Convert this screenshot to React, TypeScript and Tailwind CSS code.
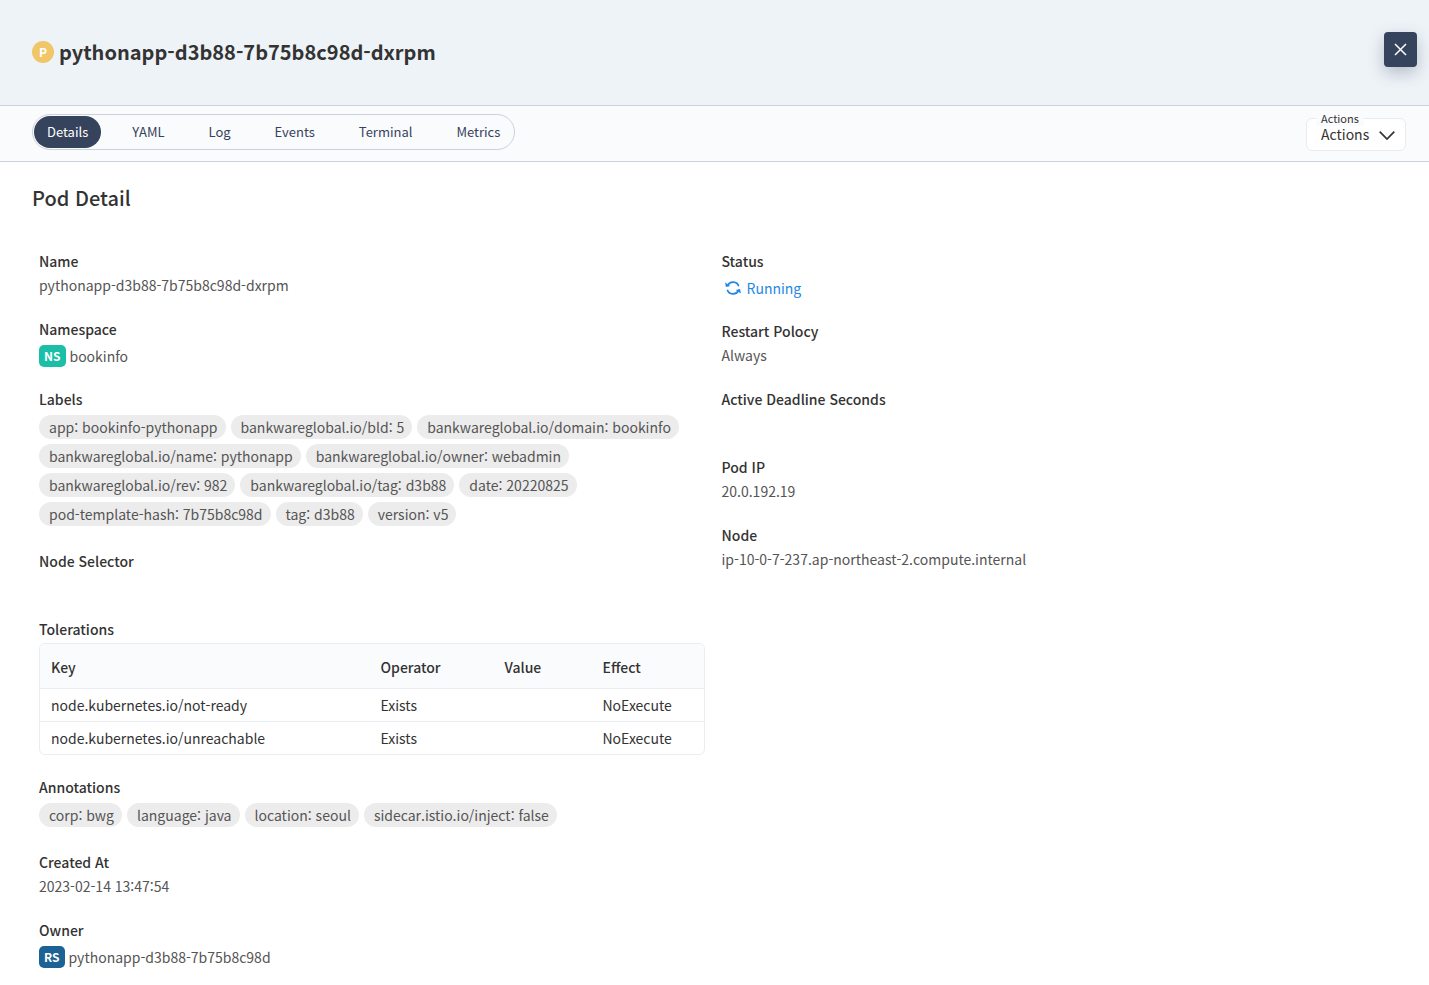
import { useState } from "react";
import type { ReactNode } from "react";

const tabs = ["Details", "YAML", "Log", "Events", "Terminal", "Metrics"];

const labels = [
  "app: bookinfo-pythonapp",
  "bankwareglobal.io/bld: 5",
  "bankwareglobal.io/domain: bookinfo",
  "bankwareglobal.io/name: pythonapp",
  "bankwareglobal.io/owner: webadmin",
  "bankwareglobal.io/rev: 982",
  "bankwareglobal.io/tag: d3b88",
  "date: 20220825",
  "pod-template-hash: 7b75b8c98d",
  "tag: d3b88",
  "version: v5",
];

const annotations = ["corp: bwg", "language: java", "location: seoul", "sidecar.istio.io/inject: false"];

const tolerations = [
  { key: "node.kubernetes.io/not-ready", operator: "Exists", value: "", effect: "NoExecute" },
  { key: "node.kubernetes.io/unreachable", operator: "Exists", value: "", effect: "NoExecute" },
];

function Field({ label, children }: { label: string; children?: ReactNode }) {
  return (
    <div className="pb-5">
      <dt className="font-medium text-[#333]">{label}</dt>
      <dd className="min-h-6">{children}</dd>
    </div>
  );
}

function Chips({ items }: { items: string[] }) {
  return (
    <ul className="flex flex-wrap gap-[5px] pt-1 pb-[3px]">
      {items.map((item) => (
        <li key={item} className="rounded-full bg-[#ececec] pr-2 pl-[10px]">
          {item}
        </li>
      ))}
    </ul>
  );
}

function Badge({ tone, children }: { tone: string; children: ReactNode }) {
  return (
    <span className={`flex h-[22px] items-center rounded-[5px] pr-[6px] pl-[5px] text-xs font-bold text-white ${tone}`}>
      {children}
    </span>
  );
}

function SyncIcon() {
  return (
    <svg viewBox="0 0 16 14" className="h-[14px] w-4" fill="none" stroke="currentColor" strokeWidth="1.7" aria-hidden="true">
      <path d="M2.6 4.4A6 6 0 0 1 13.7 5.2M13.4 9.6A6 6 0 0 1 2.3 8.8" />
      <path d="M.1 1.6L5.3 5L.9 6ZM15.9 12.4L10.7 9L15.1 8Z" fill="currentColor" stroke="none" />
    </svg>
  );
}

function Tolerations() {
  return (
    <div className="mt-[2px] overflow-hidden rounded-md border border-[#e9edf2] text-[#333]">
      <table className="w-full table-fixed border-collapse text-left">
        <colgroup>
          <col />
          <col className="w-[124px]" />
          <col className="w-[98px]" />
          <col className="w-[112px]" />
        </colgroup>
        <thead className="bg-[#fafbfd]">
          <tr className="h-11 border-b border-[#e9edf2]">
            {["Key", "Operator", "Value", "Effect"].map((heading) => (
              <th key={heading} scope="col" className="pt-[3px] pl-[11px] font-medium">
                {heading}
              </th>
            ))}
          </tr>
        </thead>
        <tbody>
          {tolerations.map((row) => (
            <tr key={row.key} className="h-[33px] border-b border-[#e9edf2] last:border-b-0">
              <td className="pl-[11px]">{row.key}</td>
              <td className="pl-[11px]">{row.operator}</td>
              <td className="pl-[11px]">{row.value}</td>
              <td className="pl-[11px]">{row.effect}</td>
            </tr>
          ))}
        </tbody>
      </table>
    </div>
  );
}

export default function App() {
  const [active, setActive] = useState("Details");

  return (
    <div
      lang="ko"
      className="min-h-screen bg-white font-['Noto_Sans_CJK_KR','Noto_Sans',sans-serif] text-sm leading-6 text-[#555]"
    >
      <header className="flex items-start justify-between border-b border-[#cbd2dc] bg-[#eef3f8] pt-8 pr-3 pb-[37px] pl-8">
        <div className="flex items-center gap-[5px] pt-1">
          <span className="flex size-[22px] items-center justify-center rounded-full bg-[#f0c669] text-xs font-bold text-white">
            P
          </span>
          <h1 className="text-xl leading-8 font-bold text-[#333]">pythonapp-d3b88-7b75b8c98d-dxrpm</h1>
        </div>
        <button
          type="button"
          aria-label="Close"
          className="flex h-[35px] w-[33px] items-center justify-center rounded bg-[#36435c] text-white shadow-[0_6px_16px_rgba(54,67,92,0.3)]"
        >
          <svg viewBox="0 0 13 13" className="size-[13px]" fill="none" stroke="currentColor" strokeWidth="1.5">
            <path d="M1 1l11 11M12 1l-11 11" />
          </svg>
        </button>
      </header>

      <div className="flex items-start justify-between border-b border-[#cbd2dc] bg-[#fafbfd] pt-2 pr-[23px] pb-[10px] pl-8">
        <nav className="flex gap-[18px] rounded-full border border-[#cbd2dc] p-px">
          {tabs.map((tab) => (
            <button
              key={tab}
              type="button"
              aria-pressed={tab === active}
              onClick={() => setActive(tab)}
              className={`h-8 rounded-full px-[13px] text-[13px] ${
                tab === active ? "bg-[#36435c] text-white" : "text-[#36435c]"
              }`}
            >
              {tab}
            </button>
          ))}
        </nav>
        <div className="relative mt-1 text-[#333]">
          <label htmlFor="actions" className="absolute -top-2 left-[10px] bg-[#fafbfd] px-[5px] text-[11px] leading-4">
            Actions
          </label>
          <select
            id="actions"
            className="block h-[33px] w-[100px] appearance-none rounded-md border border-[#e9ebee] bg-white pb-[2px] pl-[14px]"
          >
            <option>Actions</option>
          </select>
          <svg
            viewBox="0 0 16 9"
            className="pointer-events-none absolute top-[13px] right-[11px] h-[9px] w-4"
            fill="none"
            stroke="currentColor"
            strokeWidth="1.7"
          >
            <path d="M.7.7L8 8L15.3.7" />
          </svg>
        </div>
      </div>

      <main className="px-8 pt-5 pb-4">
        <h2 className="text-xl leading-8 font-medium text-[#333]">Pod Detail</h2>
        <div className="mt-[35px] grid grid-cols-2">
          <dl className="pr-[10px] pl-[7px]">
            <Field label="Name">pythonapp-d3b88-7b75b8c98d-dxrpm</Field>
            <Field label="Namespace">
              <div className="flex h-[26px] items-center gap-[3px] pt-1">
                <Badge tone="bg-[#1bbfa7]">NS</Badge>
                bookinfo
              </div>
            </Field>
            <Field label="Labels">
              <Chips items={labels} />
            </Field>
            <Field label="Node Selector" />
            <Field label="Tolerations">
              <Tolerations />
            </Field>
            <Field label="Annotations">
              <Chips items={annotations} />
            </Field>
            <Field label="Created At">2023-02-14 13:47:54</Field>
            <Field label="Owner">
              <div className="flex h-[26px] items-center gap-[3px] pt-1">
                <Badge tone="bg-[#1c6294]">RS</Badge>
                pythonapp-d3b88-7b75b8c98d
              </div>
            </Field>
          </dl>
          <dl className="pr-[10px] pl-[7px]">
            <Field label="Status">
              <div className="flex h-[26px] items-center gap-[6px] pt-1 pl-[3px] text-[#1e88e5]">
                <SyncIcon />
                Running
              </div>
            </Field>
            <Field label="Restart Polocy">Always</Field>
            <Field label="Active Deadline Seconds" />
            <Field label="Pod IP">20.0.192.19</Field>
            <Field label="Node">ip-10-0-7-237.ap-northeast-2.compute.internal</Field>
          </dl>
        </div>
      </main>
    </div>
  );
}
